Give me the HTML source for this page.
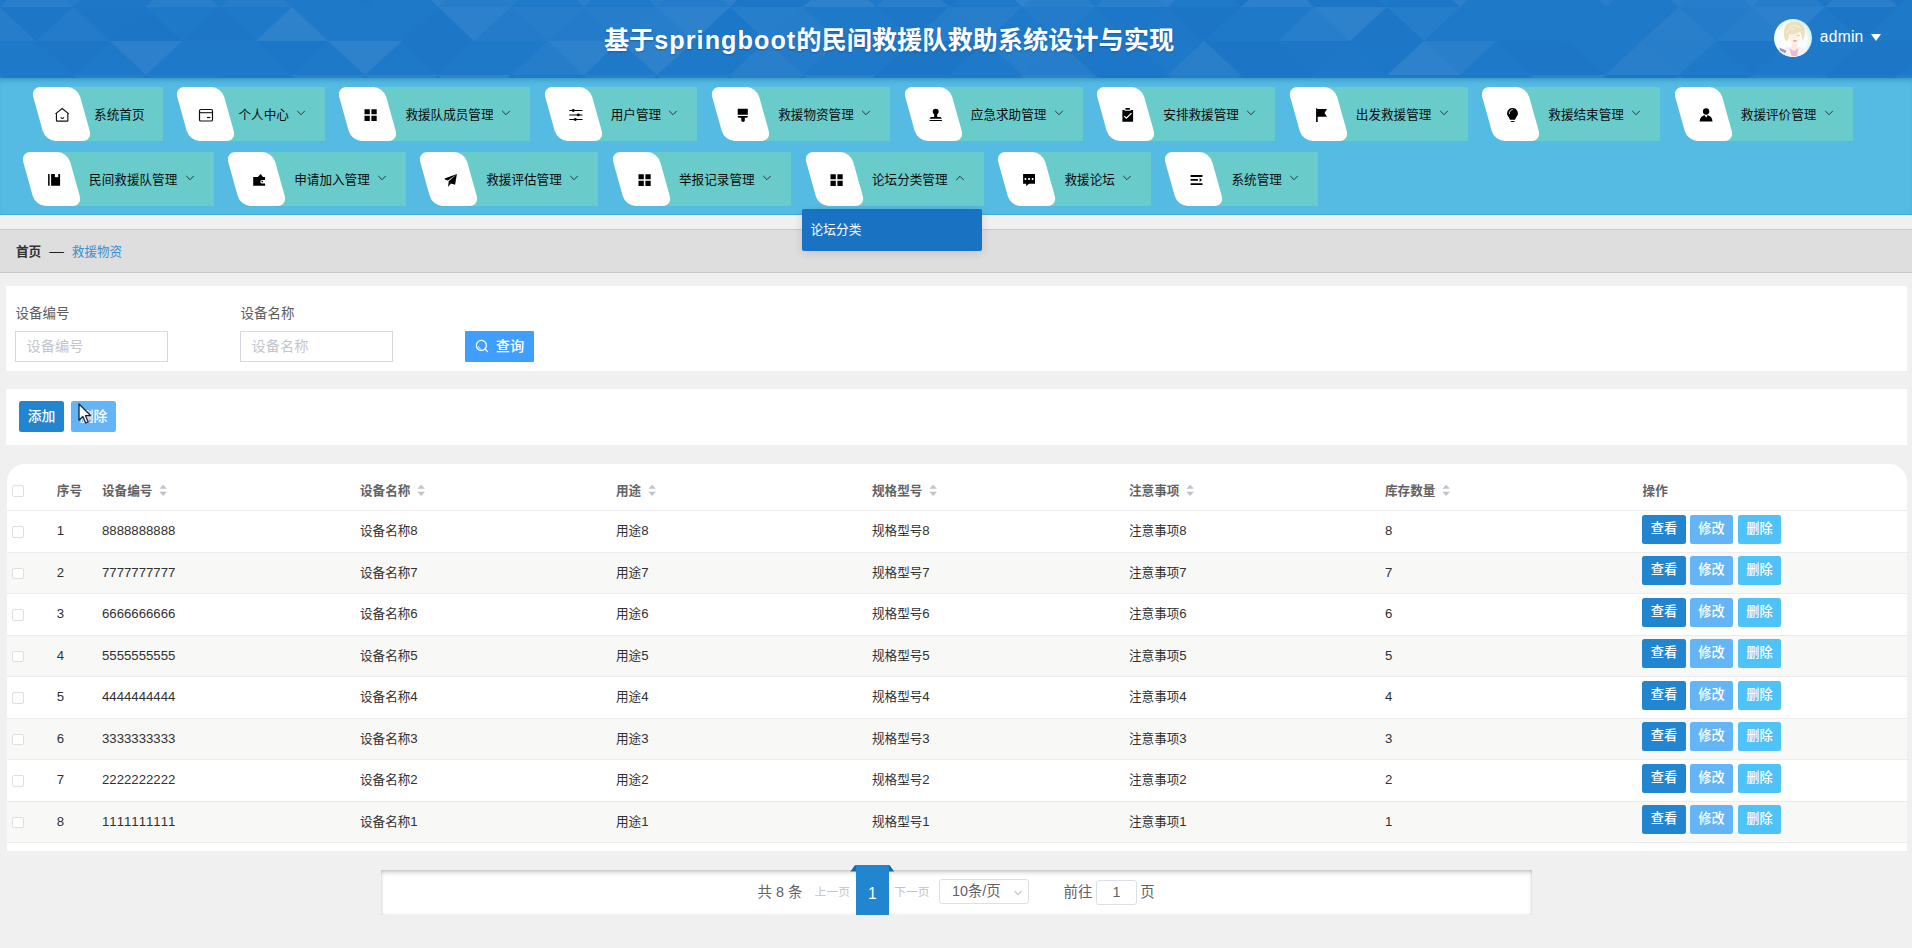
<!DOCTYPE html>
<html lang="zh-CN"><head><meta charset="utf-8"><title>基于springboot的民间救援队救助系统设计与实现</title>
<style>
*{margin:0;padding:0;box-sizing:border-box}
html,body{width:1912px;height:948px;overflow:hidden}
body{position:relative;background:#f0f0f0;font-family:"Liberation Sans","Noto Sans CJK SC",sans-serif;font-size:12.6px;color:#333}
i{font-style:normal;display:block}
#hdr{position:absolute;left:0;top:0;width:1912px;height:78px;background:#1f79c9;overflow:hidden}
#hdr svg.bg{position:absolute;left:0;top:0}
#title{position:absolute;left:0;top:21.4px;width:1778px;text-align:center;color:#fff;font-weight:bold;font-size:25.2px;line-height:38px;white-space:nowrap;text-shadow:0 1px 2px rgba(0,40,100,.35)}
#title span{letter-spacing:1.05px}
#ava{position:absolute;left:1774.1px;top:18.6px;width:38px;height:38px;border-radius:50%;overflow:hidden}
#uname{position:absolute;left:1819.8px;top:27.4px;color:#fff;font-size:15.6px;line-height:20px;letter-spacing:.25px}
#utri{position:absolute;left:1870.5px;top:34px}
#nav{position:absolute;left:0;top:78px;width:1912px;height:137px;background:#56bbe3;box-shadow:inset 0 5px 5px -3px rgba(20,110,150,.45),inset 0 -1px 0 rgba(0,60,90,.13)}
.mi{position:absolute;height:54px;background:linear-gradient(to right,transparent 22px,#6acbcb 22px);margin-top:-78px}
.mi .wb{position:absolute;left:-1.6px;top:0;width:46.9px;height:54px;background:#fff;border-radius:10px;transform:skewX(15.6deg)}
.mi .ic{position:absolute;top:18px;width:20px;height:20px}
.mi .ic svg{display:block}
.mi .mt{position:absolute;top:0;line-height:56px;font-size:12.6px;color:#0c0c0c;white-space:nowrap}
.mi .ar{position:absolute;top:22.9px}
#crumb{position:absolute;left:0;top:229px;width:1912px;height:44px;background:#dedede;border-top:1px solid #c9c9c9;border-bottom:1px solid #c9c9c9;line-height:42px;padding-left:16px;font-size:12.6px;white-space:nowrap}
#crumb b{color:#303133}
#crumb .sep{margin:0 8px 0 8px;color:#222;font-size:14.6px}
#crumb .cur{color:#3a8ed0}
#search{position:absolute;left:6px;top:286px;width:1901px;height:85px;background:#fff}
.lb{position:absolute;top:18.7px;font-size:13.5px;line-height:18px;color:#5e5e5e}
.inp{position:absolute;top:45.4px;width:153px;height:30.6px;border:1px solid #d6d7dc;background:#fff;line-height:28px;padding-left:10.6px;font-size:14.2px;color:#c3c6cd}
.qbtn{font-weight:500;position:absolute;left:458.8px;top:45px;width:69.4px;height:31px;background:#409eff;color:#fff;font-size:14.2px;line-height:30px;border-radius:1px;white-space:nowrap}
.qbtn svg{position:absolute;left:10.4px;top:8.4px}
.qbtn span{position:absolute;left:31px;top:0}
#ops{position:absolute;left:6px;top:389px;width:1901px;height:55.6px;background:#fff}
.b{position:absolute;display:block;font-weight:500;color:#fff;text-align:center;border-radius:2.5px;font-size:13.8px;white-space:nowrap}
.b1{background:#2185d0}.b2{background:#64b5f6}.b3{background:#4fc3f7}
#tbl{position:absolute;left:6.8px;top:463.7px;width:1900.2px;height:387px;background:#fff;border-radius:18px 18px 0 0;overflow:hidden}
.tr{position:absolute;left:0;width:1901px;border-bottom:1px solid #ececee}
.tr.odd{background:#f8f8f6}
.tr .c{position:absolute;top:0;line-height:40.7px;white-space:nowrap;color:#303133}
.th .c{line-height:54.6px;font-weight:bold;color:#626366}
.d{font-size:13.2px;font-kerning:none}
.cb{position:absolute;left:5.5px;width:11.8px;height:11.8px;border:1px solid #dddfe3;border-radius:2px;background:#fff}
.so{display:inline-block;vertical-align:-1.8px;margin-left:6.4px;width:8.4px;height:12.6px}
.tr .b{top:3.7px;height:29px;line-height:27.5px;width:44.2px;font-size:13.2px}
.tr .b2,.tr .b3{width:43px}
#pager{position:absolute;left:381px;top:870px;width:1151px;height:45px;background:#fff;box-shadow:inset 0 3px 5px -1px rgba(0,0,0,.22),inset 0 0 3px rgba(0,0,0,.12)}
#pager span.pt{position:absolute;top:0;line-height:45px;font-size:14.4px;color:#606266;white-space:nowrap}
#pager span.pn{position:absolute;top:0;line-height:45px;font-size:11.8px;color:#c0c4cc;white-space:nowrap}
.psel{position:absolute;left:558.3px;top:9.3px;width:90.2px;height:24.6px;border:1px solid #dcdfe6;border-radius:3px;font-size:14.4px;line-height:23px;color:#606266;padding-left:11.6px;white-space:nowrap}
.psel svg{position:absolute;left:73px;top:10px}
.pin{position:absolute;left:715.4px;top:10px;width:40.2px;height:24.8px;border:1px solid #dcdfe6;border-radius:3px;text-align:center;font-size:14.4px;line-height:22.5px;color:#606266}
#pact{position:absolute;left:855.8px;top:865.2px;width:33px;height:49.6px;background:#2185d0;border-radius:1px 1px 0 0}
#pact b{position:absolute;left:0;top:6.2px;width:33px;text-align:center;line-height:45px;color:#fff;font-size:15.6px;font-weight:normal}
#pact .f1{position:absolute;left:-5.4px;top:0;width:6.4px;height:6.4px;background:#1a69a4;clip-path:polygon(0 100%,70% 0,100% 0,100% 100%)}
#pact .f2{position:absolute;left:32px;top:0;width:6.4px;height:6.4px;background:#1a69a4;clip-path:polygon(0 0,30% 0,100% 100%,0 100%)}
#sub{position:absolute;left:802px;top:208.8px;width:180.2px;height:42.2px;background:#1a72c2;border-radius:2px;color:#fff;font-size:12.7px;line-height:42.5px;padding-left:8.6px;box-shadow:0 2px 10px rgba(0,0,0,.12)}
#cur{position:absolute;left:78px;top:402.5px}

#pact .bx{position:absolute;left:0;top:0;width:33px;height:49.6px;background:#2185d0;border-radius:1.5px 1.5px 0 0}

</style></head><body>
<div id="hdr">
<svg class="bg" width="1912" height="78" viewBox="0 0 1912 78"><path d="M-73 7L0 7L-36 -27Z" fill="#fff" fill-opacity="0.03"/><path d="M0 7L73 7L36 -27Z" fill="#fff" fill-opacity="0.05"/><path d="M36 -27L110 -27L73 7Z" fill="#fff" fill-opacity="0.02"/><path d="M73 7L146 7L110 -27Z" fill="#0a55a8" fill-opacity="0.03"/><path d="M110 -27L182 -27L146 7Z" fill="#0a55a8" fill-opacity="0.03"/><path d="M146 7L219 7L182 -27Z" fill="#fff" fill-opacity="0.05"/><path d="M219 7L292 7L256 -27Z" fill="#fff" fill-opacity="0.03"/><path d="M328 -27L402 -27L365 7Z" fill="#0a55a8" fill-opacity="0.06"/><path d="M402 -27L474 -27L438 7Z" fill="#fff" fill-opacity="0.07"/><path d="M438 7L511 7L474 -27Z" fill="#fff" fill-opacity="0.03"/><path d="M474 -27L548 -27L511 7Z" fill="#fff" fill-opacity="0.04"/><path d="M548 -27L620 -27L584 7Z" fill="#fff" fill-opacity="0.05"/><path d="M620 -27L694 -27L657 7Z" fill="#fff" fill-opacity="0.05"/><path d="M657 7L730 7L694 -27Z" fill="#fff" fill-opacity="0.02"/><path d="M694 -27L766 -27L730 7Z" fill="#fff" fill-opacity="0.06"/><path d="M730 7L803 7L766 -27Z" fill="#0a55a8" fill-opacity="0.05"/><path d="M766 -27L840 -27L803 7Z" fill="#0a55a8" fill-opacity="0.06"/><path d="M803 7L876 7L840 -27Z" fill="#fff" fill-opacity="0.07"/><path d="M876 7L949 7L912 -27Z" fill="#fff" fill-opacity="0.05"/><path d="M912 -27L986 -27L949 7Z" fill="#0a55a8" fill-opacity="0.09"/><path d="M986 -27L1058 -27L1022 7Z" fill="#fff" fill-opacity="0.08"/><path d="M1022 7L1095 7L1058 -27Z" fill="#fff" fill-opacity="0.05"/><path d="M1095 7L1168 7L1132 -27Z" fill="#fff" fill-opacity="0.05"/><path d="M1132 -27L1204 -27L1168 7Z" fill="#fff" fill-opacity="0.06"/><path d="M1204 -27L1278 -27L1241 7Z" fill="#0a55a8" fill-opacity="0.09"/><path d="M1241 7L1314 7L1278 -27Z" fill="#fff" fill-opacity="0.06"/><path d="M1278 -27L1350 -27L1314 7Z" fill="#0a55a8" fill-opacity="0.07"/><path d="M1314 7L1387 7L1350 -27Z" fill="#0a55a8" fill-opacity="0.09"/><path d="M1387 7L1460 7L1424 -27Z" fill="#0a55a8" fill-opacity="0.08"/><path d="M1424 -27L1496 -27L1460 7Z" fill="#fff" fill-opacity="0.06"/><path d="M1570 -27L1642 -27L1606 7Z" fill="#fff" fill-opacity="0.04"/><path d="M1642 -27L1716 -27L1679 7Z" fill="#fff" fill-opacity="0.05"/><path d="M1679 7L1752 7L1716 -27Z" fill="#fff" fill-opacity="0.03"/><path d="M1716 -27L1788 -27L1752 7Z" fill="#fff" fill-opacity="0.07"/><path d="M1752 7L1825 7L1788 -27Z" fill="#fff" fill-opacity="0.03"/><path d="M1788 -27L1862 -27L1825 7Z" fill="#0a55a8" fill-opacity="0.09"/><path d="M1825 7L1898 7L1862 -27Z" fill="#fff" fill-opacity="0.05"/><path d="M1862 -27L1934 -27L1898 7Z" fill="#0a55a8" fill-opacity="0.09"/><path d="M1971 7L2044 7L2008 -27Z" fill="#fff" fill-opacity="0.04"/><path d="M2008 -27L2080 -27L2044 7Z" fill="#fff" fill-opacity="0.07"/><path d="M-73 7L0 7L-36 41Z" fill="#fff" fill-opacity="0.03"/><path d="M-36 41L36 41L0 7Z" fill="#fff" fill-opacity="0.03"/><path d="M0 7L73 7L36 41Z" fill="#0a55a8" fill-opacity="0.07"/><path d="M36 41L110 41L73 7Z" fill="#fff" fill-opacity="0.02"/><path d="M73 7L146 7L110 41Z" fill="#0a55a8" fill-opacity="0.06"/><path d="M110 41L182 41L146 7Z" fill="#0a55a8" fill-opacity="0.10"/><path d="M182 41L256 41L219 7Z" fill="#0a55a8" fill-opacity="0.07"/><path d="M256 41L328 41L292 7Z" fill="#fff" fill-opacity="0.07"/><path d="M402 41L474 41L438 7Z" fill="#0a55a8" fill-opacity="0.06"/><path d="M438 7L511 7L474 41Z" fill="#fff" fill-opacity="0.06"/><path d="M474 41L548 41L511 7Z" fill="#fff" fill-opacity="0.02"/><path d="M511 7L584 7L548 41Z" fill="#fff" fill-opacity="0.03"/><path d="M548 41L620 41L584 7Z" fill="#fff" fill-opacity="0.02"/><path d="M584 7L657 7L620 41Z" fill="#fff" fill-opacity="0.03"/><path d="M620 41L694 41L657 7Z" fill="#fff" fill-opacity="0.04"/><path d="M657 7L730 7L694 41Z" fill="#fff" fill-opacity="0.07"/><path d="M694 41L766 41L730 7Z" fill="#0a55a8" fill-opacity="0.04"/><path d="M730 7L803 7L766 41Z" fill="#fff" fill-opacity="0.04"/><path d="M766 41L840 41L803 7Z" fill="#fff" fill-opacity="0.03"/><path d="M876 7L949 7L912 41Z" fill="#0a55a8" fill-opacity="0.06"/><path d="M912 41L986 41L949 7Z" fill="#fff" fill-opacity="0.03"/><path d="M949 7L1022 7L986 41Z" fill="#fff" fill-opacity="0.04"/><path d="M1022 7L1095 7L1058 41Z" fill="#fff" fill-opacity="0.02"/><path d="M1095 7L1168 7L1132 41Z" fill="#0a55a8" fill-opacity="0.04"/><path d="M1132 41L1204 41L1168 7Z" fill="#0a55a8" fill-opacity="0.03"/><path d="M1168 7L1241 7L1204 41Z" fill="#0a55a8" fill-opacity="0.10"/><path d="M1278 41L1350 41L1314 7Z" fill="#fff" fill-opacity="0.04"/><path d="M1314 7L1387 7L1350 41Z" fill="#fff" fill-opacity="0.07"/><path d="M1350 41L1424 41L1387 7Z" fill="#0a55a8" fill-opacity="0.08"/><path d="M1387 7L1460 7L1424 41Z" fill="#fff" fill-opacity="0.03"/><path d="M1642 41L1716 41L1679 7Z" fill="#fff" fill-opacity="0.05"/><path d="M1679 7L1752 7L1716 41Z" fill="#fff" fill-opacity="0.02"/><path d="M1716 41L1788 41L1752 7Z" fill="#fff" fill-opacity="0.04"/><path d="M1752 7L1825 7L1788 41Z" fill="#fff" fill-opacity="0.06"/><path d="M1825 7L1898 7L1862 41Z" fill="#0a55a8" fill-opacity="0.10"/><path d="M1934 41L2008 41L1971 7Z" fill="#fff" fill-opacity="0.03"/><path d="M1971 7L2044 7L2008 41Z" fill="#fff" fill-opacity="0.03"/><path d="M-73 75L0 75L-36 41Z" fill="#fff" fill-opacity="0.06"/><path d="M36 41L110 41L73 75Z" fill="#0a55a8" fill-opacity="0.08"/><path d="M110 41L182 41L146 75Z" fill="#fff" fill-opacity="0.06"/><path d="M256 41L328 41L292 75Z" fill="#0a55a8" fill-opacity="0.04"/><path d="M328 41L402 41L365 75Z" fill="#fff" fill-opacity="0.07"/><path d="M402 41L474 41L438 75Z" fill="#0a55a8" fill-opacity="0.06"/><path d="M511 75L584 75L548 41Z" fill="#fff" fill-opacity="0.03"/><path d="M548 41L620 41L584 75Z" fill="#fff" fill-opacity="0.07"/><path d="M620 41L694 41L657 75Z" fill="#fff" fill-opacity="0.07"/><path d="M730 75L803 75L766 41Z" fill="#fff" fill-opacity="0.05"/><path d="M766 41L840 41L803 75Z" fill="#fff" fill-opacity="0.02"/><path d="M876 75L949 75L912 41Z" fill="#0a55a8" fill-opacity="0.10"/><path d="M912 41L986 41L949 75Z" fill="#0a55a8" fill-opacity="0.09"/><path d="M986 41L1058 41L1022 75Z" fill="#fff" fill-opacity="0.04"/><path d="M1022 75L1095 75L1058 41Z" fill="#fff" fill-opacity="0.03"/><path d="M1058 41L1132 41L1095 75Z" fill="#0a55a8" fill-opacity="0.05"/><path d="M1095 75L1168 75L1132 41Z" fill="#0a55a8" fill-opacity="0.04"/><path d="M1168 75L1241 75L1204 41Z" fill="#fff" fill-opacity="0.05"/><path d="M1204 41L1278 41L1241 75Z" fill="#0a55a8" fill-opacity="0.09"/><path d="M1241 75L1314 75L1278 41Z" fill="#0a55a8" fill-opacity="0.09"/><path d="M1278 41L1350 41L1314 75Z" fill="#0a55a8" fill-opacity="0.07"/><path d="M1314 75L1387 75L1350 41Z" fill="#0a55a8" fill-opacity="0.03"/><path d="M1350 41L1424 41L1387 75Z" fill="#0a55a8" fill-opacity="0.04"/><path d="M1387 75L1460 75L1424 41Z" fill="#fff" fill-opacity="0.07"/><path d="M1424 41L1496 41L1460 75Z" fill="#fff" fill-opacity="0.05"/><path d="M1496 41L1570 41L1533 75Z" fill="#0a55a8" fill-opacity="0.05"/><path d="M1533 75L1606 75L1570 41Z" fill="#0a55a8" fill-opacity="0.07"/><path d="M1606 75L1679 75L1642 41Z" fill="#fff" fill-opacity="0.05"/><path d="M1642 41L1716 41L1679 75Z" fill="#fff" fill-opacity="0.04"/><path d="M1716 41L1788 41L1752 75Z" fill="#0a55a8" fill-opacity="0.07"/><path d="M1825 75L1898 75L1862 41Z" fill="#0a55a8" fill-opacity="0.07"/><path d="M1862 41L1934 41L1898 75Z" fill="#0a55a8" fill-opacity="0.07"/><path d="M1934 41L2008 41L1971 75Z" fill="#0a55a8" fill-opacity="0.07"/><path d="M1971 75L2044 75L2008 41Z" fill="#0a55a8" fill-opacity="0.10"/><path d="M-36 109L36 109L0 75Z" fill="#fff" fill-opacity="0.05"/><path d="M73 75L146 75L110 109Z" fill="#fff" fill-opacity="0.03"/><path d="M110 109L182 109L146 75Z" fill="#0a55a8" fill-opacity="0.04"/><path d="M146 75L219 75L182 109Z" fill="#fff" fill-opacity="0.02"/><path d="M292 75L365 75L328 109Z" fill="#fff" fill-opacity="0.06"/><path d="M365 75L438 75L402 109Z" fill="#fff" fill-opacity="0.07"/><path d="M438 75L511 75L474 109Z" fill="#fff" fill-opacity="0.08"/><path d="M474 109L548 109L511 75Z" fill="#0a55a8" fill-opacity="0.06"/><path d="M584 75L657 75L620 109Z" fill="#fff" fill-opacity="0.05"/><path d="M620 109L694 109L657 75Z" fill="#0a55a8" fill-opacity="0.05"/><path d="M657 75L730 75L694 109Z" fill="#fff" fill-opacity="0.04"/><path d="M730 75L803 75L766 109Z" fill="#fff" fill-opacity="0.05"/><path d="M766 109L840 109L803 75Z" fill="#0a55a8" fill-opacity="0.03"/><path d="M803 75L876 75L840 109Z" fill="#fff" fill-opacity="0.06"/><path d="M840 109L912 109L876 75Z" fill="#0a55a8" fill-opacity="0.03"/><path d="M986 109L1058 109L1022 75Z" fill="#fff" fill-opacity="0.04"/><path d="M1022 75L1095 75L1058 109Z" fill="#fff" fill-opacity="0.07"/><path d="M1058 109L1132 109L1095 75Z" fill="#fff" fill-opacity="0.03"/><path d="M1095 75L1168 75L1132 109Z" fill="#0a55a8" fill-opacity="0.09"/><path d="M1168 75L1241 75L1204 109Z" fill="#fff" fill-opacity="0.03"/><path d="M1241 75L1314 75L1278 109Z" fill="#0a55a8" fill-opacity="0.08"/><path d="M1278 109L1350 109L1314 75Z" fill="#fff" fill-opacity="0.02"/><path d="M1350 109L1424 109L1387 75Z" fill="#0a55a8" fill-opacity="0.04"/><path d="M1496 109L1570 109L1533 75Z" fill="#fff" fill-opacity="0.07"/><path d="M1533 75L1606 75L1570 109Z" fill="#fff" fill-opacity="0.07"/><path d="M1570 109L1642 109L1606 75Z" fill="#0a55a8" fill-opacity="0.05"/><path d="M1606 75L1679 75L1642 109Z" fill="#0a55a8" fill-opacity="0.09"/><path d="M1642 109L1716 109L1679 75Z" fill="#fff" fill-opacity="0.03"/><path d="M1679 75L1752 75L1716 109Z" fill="#0a55a8" fill-opacity="0.05"/><path d="M1716 109L1788 109L1752 75Z" fill="#fff" fill-opacity="0.03"/><path d="M1752 75L1825 75L1788 109Z" fill="#fff" fill-opacity="0.03"/><path d="M1788 109L1862 109L1825 75Z" fill="#fff" fill-opacity="0.04"/><path d="M1862 109L1934 109L1898 75Z" fill="#fff" fill-opacity="0.05"/><path d="M1898 75L1971 75L1934 109Z" fill="#fff" fill-opacity="0.04"/><path d="M1934 109L2008 109L1971 75Z" fill="#fff" fill-opacity="0.04"/><path d="M1971 75L2044 75L2008 109Z" fill="#fff" fill-opacity="0.06"/></svg>
<div id="title">基于<span>springboot</span>的民间救援队救助系统设计与实现</div>
<div id="ava"><svg width="38" height="38" viewBox="0 0 38 38"><defs><radialGradient id="ag" cx="42%" cy="55%" r="62%"><stop offset="0" stop-color="#ffffff"/><stop offset=".72" stop-color="#f6fdfc"/><stop offset="1" stop-color="#bdeef2"/></radialGradient><filter id="af" x="-10%" y="-10%" width="120%" height="120%"><feGaussianBlur stdDeviation=".55"/></filter></defs><rect width="38" height="38" fill="url(#ag)"/><g filter="url(#af)"><path d="M3 38 L6 31 L15 27.5 L20 31 L25 27.5 L33 31 L36 38 Z" fill="#f6f1f6"/><path d="M5.5 28.5 L12.5 31.8 L11 34.2 L6 31.5 Z" fill="#6a5a86" fill-opacity=".6"/><path d="M15.5 29 L17.5 37 L23 37 L24.5 29 L20 32 Z" fill="#e3b3c9" fill-opacity=".85"/><path d="M18 24 H23 L23.5 29 L20.3 31.5 L17 29 Z" fill="#fbe9df"/><ellipse cx="20.8" cy="18.6" rx="5.6" ry="6.4" fill="#fdf1e8"/><path d="M10.5 19.5 C8 9 13 2.5 20 2.6 C27.5 2.2 32.5 8 30.5 17 C30 19.5 29 21 28.2 21.8 C28.6 17.5 27.4 14.5 25.4 12.8 C22.5 15.5 18 16 15.5 15 C15 18 14.2 20.6 13.4 22.4 C12 22 11 21 10.5 19.5 Z" fill="#ece1bd"/><path d="M14 9 C17 5.5 23 5.5 26.5 9 M12.5 14 C14 10.5 17 9.5 20 10" fill="none" stroke="#f6efd6" stroke-width="1.3"/><path d="M22.5 16.8 L25.6 16.3" stroke="#c9b98c" stroke-width=".7"/><ellipse cx="20.9" cy="21.8" rx="1.9" ry=".85" fill="#e79c92"/></g></svg></div>
<div id="uname">admin</div>
<svg id="utri" width="10" height="7" viewBox="0 0 10 7"><path d="M0 0 H10 L5 7 Z" fill="#fff"/></svg>
</div>

<div id="nav">
<div class="mi" style="left:39.3px;top:87px;width:124.2px"><i class="wb"></i><span class="ic" style="left:12.3px"><svg width="20" height="20" viewBox="0 0 20 20"><path d="M3.5 8.9 L10.15 3.5 L16.8 8.9" fill="none" stroke="#111" stroke-width="1.15" stroke-linejoin="miter"/><path d="M4.45 8.3 V15.5 Q4.45 16.15 5.1 16.15 H15.2 Q15.85 16.15 15.85 15.5 V8.3" fill="none" stroke="#111" stroke-width="1.15"/><path d="M8.6 12.3 Q10.2 14.5 11.9 12.3" fill="none" stroke="#111" stroke-width="1.1"/></svg></span><span class="mt" style="left:54.8px">系统首页</span></div>
<div class="mi" style="left:183.7px;top:87px;width:141.6px"><i class="wb"></i><span class="ic" style="left:12.3px"><svg width="20" height="20" viewBox="0 0 20 20"><rect x="3.5" y="4.5" width="13" height="11.5" rx="1.3" fill="none" stroke="#111" stroke-width="1.2"/><path d="M3.5 7.7 H16.5" stroke="#111" stroke-width="1.1"/><path d="M11 12.5 H14.4" stroke="#111" stroke-width="1.2"/></svg></span><span class="mt" style="left:54.8px">个人中心</span><svg class="ar" style="left:112.6px" width="10" height="6" viewBox="0 0 10 6"><path d="M1.2 0.9 L5 4.7 L8.8 0.9" fill="none" stroke="#2a2a2a" stroke-width="0.95"/></svg></div>
<div class="mi" style="left:345.3px;top:87px;width:184.7px"><i class="wb"></i><span class="ic" style="left:14.3px"><svg width="20" height="20" viewBox="0 0 20 20"><path d="M4.5 4.15 h5.3 v5.1 h-5.3 Z M11.4 4.15 h5.3 v5.1 h-5.3 Z M4.5 10.85 h5.3 v5.1 h-5.3 Z M11.4 10.85 h5.3 v5.1 h-5.3 Z" fill="#000"/></svg></span><span class="mt" style="left:60.1px">救援队成员管理</span><svg class="ar" style="left:155.7px" width="10" height="6" viewBox="0 0 10 6"><path d="M1.2 0.9 L5 4.7 L8.8 0.9" fill="none" stroke="#2a2a2a" stroke-width="0.95"/></svg></div>
<div class="mi" style="left:551.4px;top:87px;width:146.1px"><i class="wb"></i><span class="ic" style="left:14.3px"><svg width="20" height="20" viewBox="0 0 20 20"><path d="M3.7 5.5 H16.1 M3.7 9.9 H16.1 M3.7 14.5 H16.1" stroke="#000" stroke-width="1.05" stroke-linecap="round"/><circle cx="7.3" cy="5.5" r="1.45" fill="#000"/><circle cx="12.3" cy="9.9" r="1.45" fill="#000"/><circle cx="9.3" cy="14.5" r="1.45" fill="#000"/></svg></span><span class="mt" style="left:59.3px">用户管理</span><svg class="ar" style="left:117.1px" width="10" height="6" viewBox="0 0 10 6"><path d="M1.2 0.9 L5 4.7 L8.8 0.9" fill="none" stroke="#2a2a2a" stroke-width="0.95"/></svg></div>
<div class="mi" style="left:718.9px;top:87px;width:171.3px"><i class="wb"></i><span class="ic" style="left:14.3px"><svg width="20" height="20" viewBox="0 0 20 20"><path d="M4.7 3.8 H14.8 V9.8 H4.7 Z M4.7 10.9 H14.8 V11.5 Q14.8 12.7 13.4 12.7 H11.8 V15.6 Q11.8 17 10.05 17 Q8.3 17 8.3 15.6 V12.7 H6.1 Q4.7 12.7 4.7 11.5 Z" fill="#000"/></svg></span><span class="mt" style="left:59.3px">救援物资管理</span><svg class="ar" style="left:142.3px" width="10" height="6" viewBox="0 0 10 6"><path d="M1.2 0.9 L5 4.7 L8.8 0.9" fill="none" stroke="#2a2a2a" stroke-width="0.95"/></svg></div>
<div class="mi" style="left:911.5px;top:87px;width:171.3px"><i class="wb"></i><span class="ic" style="left:14.3px"><svg width="20" height="20" viewBox="0 0 20 20"><circle cx="9.7" cy="6.6" r="2.95" fill="#000"/><path d="M8.2 8 H11.2 V11.9 H14.4 L15.5 13 V13.8 H3.9 V13 L5 11.9 H8.2 Z M3.5 15.1 H15.9 V16 H3.5 Z" fill="#000"/></svg></span><span class="mt" style="left:59.3px">应急求助管理</span><svg class="ar" style="left:142.3px" width="10" height="6" viewBox="0 0 10 6"><path d="M1.2 0.9 L5 4.7 L8.8 0.9" fill="none" stroke="#2a2a2a" stroke-width="0.95"/></svg></div>
<div class="mi" style="left:1104.0px;top:87px;width:171.3px"><i class="wb"></i><span class="ic" style="left:14.3px"><svg width="20" height="20" viewBox="0 0 20 20"><path d="M4.4 5 H6.7 V5.8 H12.7 V5 H15.1 V16.7 H4.4 Z M7.5 3.1 H11.9 V4.7 H7.5 Z" fill="#000"/><path d="M6.2 11.1 L8.4 13.2 L13.5 8.1" fill="none" stroke="#fff" stroke-width="1.3"/></svg></span><span class="mt" style="left:59.3px">安排救援管理</span><svg class="ar" style="left:142.3px" width="10" height="6" viewBox="0 0 10 6"><path d="M1.2 0.9 L5 4.7 L8.8 0.9" fill="none" stroke="#2a2a2a" stroke-width="0.95"/></svg></div>
<div class="mi" style="left:1296.5px;top:87px;width:171.3px"><i class="wb"></i><span class="ic" style="left:14.3px"><svg width="20" height="20" viewBox="0 0 20 20"><path d="M5.1 2.9 L6.7 4.1 H16 L13.5 7.9 L16 11.7 H6.7 V16.9 H5.1 Z" fill="#000"/></svg></span><span class="mt" style="left:59.3px">出发救援管理</span><svg class="ar" style="left:142.3px" width="10" height="6" viewBox="0 0 10 6"><path d="M1.2 0.9 L5 4.7 L8.8 0.9" fill="none" stroke="#2a2a2a" stroke-width="0.95"/></svg></div>
<div class="mi" style="left:1489.0px;top:87px;width:171.3px"><i class="wb"></i><span class="ic" style="left:14.3px"><svg width="20" height="20" viewBox="0 0 20 20"><path d="M9.5 2.9 A5.4 5.4 0 0 1 13.2 12.2 L12 14.7 H7 L5.8 12.2 A5.4 5.4 0 0 1 9.5 2.9 Z" fill="#000"/><path d="M7.7 16.1 H11.5 V17 H7.7 Z" fill="#000"/><path d="M6.3 8.6 A3.4 3.4 0 0 1 9.3 4.7" fill="none" stroke="#fff" stroke-width=".9" stroke-linecap="round"/></svg></span><span class="mt" style="left:59.3px">救援结束管理</span><svg class="ar" style="left:142.3px" width="10" height="6" viewBox="0 0 10 6"><path d="M1.2 0.9 L5 4.7 L8.8 0.9" fill="none" stroke="#2a2a2a" stroke-width="0.95"/></svg></div>
<div class="mi" style="left:1681.5px;top:87px;width:171.3px"><i class="wb"></i><span class="ic" style="left:14.3px"><svg width="20" height="20" viewBox="0 0 20 20"><circle cx="10.1" cy="6.5" r="3.15" fill="#000"/><path d="M3.6 16.6 Q3.9 11.2 8.7 10.2 L10.1 12.7 L11.5 10.2 Q16.3 11.2 16.5 16.6 Z" fill="#000"/></svg></span><span class="mt" style="left:59.3px">救援评价管理</span><svg class="ar" style="left:142.3px" width="10" height="6" viewBox="0 0 10 6"><path d="M1.2 0.9 L5 4.7 L8.8 0.9" fill="none" stroke="#2a2a2a" stroke-width="0.95"/></svg></div>
<div class="mi" style="left:29.3px;top:152px;width:184.4px"><i class="wb"></i><span class="ic" style="left:14.3px"><svg width="20" height="20" viewBox="0 0 20 20"><path d="M4.1 4.1 H5.6 V15.7 H4.1 Z M7.1 4.1 H10.9 V7 L12.6 7.3 L14.3 7 V4.1 H16.1 V15.7 H7.1 Z" fill="#000"/></svg></span><span class="mt" style="left:59.8px">民间救援队管理</span><svg class="ar" style="left:155.4px" width="10" height="6" viewBox="0 0 10 6"><path d="M1.2 0.9 L5 4.7 L8.8 0.9" fill="none" stroke="#2a2a2a" stroke-width="0.95"/></svg></div>
<div class="mi" style="left:234.4px;top:152px;width:171.8px"><i class="wb"></i><span class="ic" style="left:14.3px"><svg width="20" height="20" viewBox="0 0 20 20"><path d="M8.5 7.2 L11.7 4.1 L14.2 7.2 Z" fill="#000"/><path d="M4.2 7 H16.1 V9.9 H13 Q11.3 9.9 11.3 11.65 Q11.3 13.4 13 13.4 H16.1 V15.8 H4.2 Z" fill="#000"/><circle cx="13.2" cy="11.6" r=".8" fill="#000"/></svg></span><span class="mt" style="left:59.8px">申请加入管理</span><svg class="ar" style="left:142.8px" width="10" height="6" viewBox="0 0 10 6"><path d="M1.2 0.9 L5 4.7 L8.8 0.9" fill="none" stroke="#2a2a2a" stroke-width="0.95"/></svg></div>
<div class="mi" style="left:426.9px;top:152px;width:171.3px"><i class="wb"></i><span class="ic" style="left:14.3px"><svg width="20" height="20" viewBox="0 0 20 20"><path d="M15.9 3.9 L3.6 8.5 L3.9 9.5 L7.0 10.4 Z M15.9 3.9 L7.7 11.2 L7.1 16.9 L9.9 13.5 L14.1 14.8 Z" fill="#000"/></svg></span><span class="mt" style="left:59.3px">救援评估管理</span><svg class="ar" style="left:142.3px" width="10" height="6" viewBox="0 0 10 6"><path d="M1.2 0.9 L5 4.7 L8.8 0.9" fill="none" stroke="#2a2a2a" stroke-width="0.95"/></svg></div>
<div class="mi" style="left:619.5px;top:152px;width:171.5px"><i class="wb"></i><span class="ic" style="left:14.3px"><svg width="20" height="20" viewBox="0 0 20 20"><path d="M4.5 4.15 h5.3 v5.1 h-5.3 Z M11.4 4.15 h5.3 v5.1 h-5.3 Z M4.5 10.85 h5.3 v5.1 h-5.3 Z M11.4 10.85 h5.3 v5.1 h-5.3 Z" fill="#000"/></svg></span><span class="mt" style="left:59.5px">举报记录管理</span><svg class="ar" style="left:142.5px" width="10" height="6" viewBox="0 0 10 6"><path d="M1.2 0.9 L5 4.7 L8.8 0.9" fill="none" stroke="#2a2a2a" stroke-width="0.95"/></svg></div>
<div class="mi" style="left:812.2px;top:152px;width:171.8px"><i class="wb"></i><span class="ic" style="left:14.3px"><svg width="20" height="20" viewBox="0 0 20 20"><path d="M4.5 4.15 h5.3 v5.1 h-5.3 Z M11.4 4.15 h5.3 v5.1 h-5.3 Z M4.5 10.85 h5.3 v5.1 h-5.3 Z M11.4 10.85 h5.3 v5.1 h-5.3 Z" fill="#000"/></svg></span><span class="mt" style="left:59.8px">论坛分类管理</span><svg class="ar" style="left:142.8px" width="10" height="6" viewBox="0 0 10 6"><path d="M1.2 5.1 L5 1.3 L8.8 5.1" fill="none" stroke="#2a2a2a" stroke-width="0.95"/></svg></div>
<div class="mi" style="left:1004.7px;top:152px;width:146.6px"><i class="wb"></i><span class="ic" style="left:14.3px"><svg width="20" height="20" viewBox="0 0 20 20"><path d="M4.1 4.1 H16 V13.8 H10.1 L7.2 16 L7.1 13.8 H4.1 Z" fill="#000"/><path d="M5.7 8 h1.5 v1.9 h-1.5 Z M9.2 8 h1.7 v1.9 h-1.7 Z M12.8 8 h1.6 v1.9 h-1.6 Z" fill="#fff"/></svg></span><span class="mt" style="left:59.8px">救援论坛</span><svg class="ar" style="left:117.6px" width="10" height="6" viewBox="0 0 10 6"><path d="M1.2 0.9 L5 4.7 L8.8 0.9" fill="none" stroke="#2a2a2a" stroke-width="0.95"/></svg></div>
<div class="mi" style="left:1171.7px;top:152px;width:146.6px"><i class="wb"></i><span class="ic" style="left:14.3px"><svg width="20" height="20" viewBox="0 0 20 20"><path d="M5.3 6 H15.8 M5.3 9.9 H11.2 M5.3 14.1 H15.8" stroke="#000" stroke-width="1.8" stroke-linecap="round"/><path d="M13.6 8.1 L16.1 9.9 L13.6 11.7 Z" fill="#000"/></svg></span><span class="mt" style="left:59.8px">系统管理</span><svg class="ar" style="left:117.6px" width="10" height="6" viewBox="0 0 10 6"><path d="M1.2 0.9 L5 4.7 L8.8 0.9" fill="none" stroke="#2a2a2a" stroke-width="0.95"/></svg></div>
</div>
<div id="crumb"><b>首页</b><span class="sep">—</span><span class="cur">救援物资</span></div>
<div id="search">
<label class="lb" style="left:9.6px">设备编号</label>
<div class="inp" style="left:9px"><span>设备编号</span></div>
<label class="lb" style="left:234.4px">设备名称</label>
<div class="inp" style="left:234px"><span>设备名称</span></div>
<div class="qbtn"><svg width="14" height="14" viewBox="0 0 14 14"><circle cx="6.4" cy="6.4" r="5" fill="none" stroke="#fff" stroke-width="1.25"/><path d="M10 10 L12.6 12.6" stroke="#fff" stroke-width="1.3" stroke-linecap="round"/><path d="M3.2 7.2 A3.4 3.4 0 0 0 5.6 9.6" fill="none" stroke="#fff" stroke-width="0.9"/></svg><span>查询</span></div>
</div>
<div id="ops"><span class="b b1" style="left:13px;top:12px;width:45px;height:31px;line-height:31.4px">添加</span><span class="b b2" style="left:65.2px;top:12px;width:44.8px;height:31px;line-height:31.4px">删除</span></div>
<div id="tbl">
<div class="tr th" style="top:0;height:47.4px"><i class="cb" style="top:21.7px"></i><span class="c" style="left:50.0px">序号</span><span class="c" style="left:95.2px">设备编号<svg class="so" width="8" height="12" viewBox="0 0 8 12"><path d="M0.3 4.6 L4 0.6 L7.7 4.6 Z M0.3 7.4 L4 11.4 L7.7 7.4 Z" fill="#c0c4cc"/></svg></span><span class="c" style="left:353.2px">设备名称<svg class="so" width="8" height="12" viewBox="0 0 8 12"><path d="M0.3 4.6 L4 0.6 L7.7 4.6 Z M0.3 7.4 L4 11.4 L7.7 7.4 Z" fill="#c0c4cc"/></svg></span><span class="c" style="left:609.2px">用途<svg class="so" width="8" height="12" viewBox="0 0 8 12"><path d="M0.3 4.6 L4 0.6 L7.7 4.6 Z M0.3 7.4 L4 11.4 L7.7 7.4 Z" fill="#c0c4cc"/></svg></span><span class="c" style="left:865.2px">规格型号<svg class="so" width="8" height="12" viewBox="0 0 8 12"><path d="M0.3 4.6 L4 0.6 L7.7 4.6 Z M0.3 7.4 L4 11.4 L7.7 7.4 Z" fill="#c0c4cc"/></svg></span><span class="c" style="left:1122.2px">注意事项<svg class="so" width="8" height="12" viewBox="0 0 8 12"><path d="M0.3 4.6 L4 0.6 L7.7 4.6 Z M0.3 7.4 L4 11.4 L7.7 7.4 Z" fill="#c0c4cc"/></svg></span><span class="c" style="left:1378.2px">库存数量<svg class="so" width="8" height="12" viewBox="0 0 8 12"><path d="M0.3 4.6 L4 0.6 L7.7 4.6 Z M0.3 7.4 L4 11.4 L7.7 7.4 Z" fill="#c0c4cc"/></svg></span><span class="c" style="left:1635.8px">操作</span></div>
<div class="tr" style="top:47.40px;height:41.50px"><i class="cb" style="top:15px"></i><span class="c" style="left:50.0px"><span class="d">1</span></span><span class="c" style="left:95.2px"><span class="d">8888888888</span></span><span class="c" style="left:353.2px">设备名称<span class="d">8</span></span><span class="c" style="left:609.2px">用途<span class="d">8</span></span><span class="c" style="left:865.2px">规格型号<span class="d">8</span></span><span class="c" style="left:1122.2px">注意事项<span class="d">8</span></span><span class="c" style="left:1378.2px"><span class="d">8</span></span><span class="b b1" style="left:1635px">查看</span><span class="b b2" style="left:1683.2px">修改</span><span class="b b3" style="left:1731.1px">删除</span></div>
<div class="tr odd" style="top:88.90px;height:41.50px"><i class="cb" style="top:15px"></i><span class="c" style="left:50.0px"><span class="d">2</span></span><span class="c" style="left:95.2px"><span class="d">7777777777</span></span><span class="c" style="left:353.2px">设备名称<span class="d">7</span></span><span class="c" style="left:609.2px">用途<span class="d">7</span></span><span class="c" style="left:865.2px">规格型号<span class="d">7</span></span><span class="c" style="left:1122.2px">注意事项<span class="d">7</span></span><span class="c" style="left:1378.2px"><span class="d">7</span></span><span class="b b1" style="left:1635px">查看</span><span class="b b2" style="left:1683.2px">修改</span><span class="b b3" style="left:1731.1px">删除</span></div>
<div class="tr" style="top:130.40px;height:41.50px"><i class="cb" style="top:15px"></i><span class="c" style="left:50.0px"><span class="d">3</span></span><span class="c" style="left:95.2px"><span class="d">6666666666</span></span><span class="c" style="left:353.2px">设备名称<span class="d">6</span></span><span class="c" style="left:609.2px">用途<span class="d">6</span></span><span class="c" style="left:865.2px">规格型号<span class="d">6</span></span><span class="c" style="left:1122.2px">注意事项<span class="d">6</span></span><span class="c" style="left:1378.2px"><span class="d">6</span></span><span class="b b1" style="left:1635px">查看</span><span class="b b2" style="left:1683.2px">修改</span><span class="b b3" style="left:1731.1px">删除</span></div>
<div class="tr odd" style="top:171.90px;height:41.50px"><i class="cb" style="top:15px"></i><span class="c" style="left:50.0px"><span class="d">4</span></span><span class="c" style="left:95.2px"><span class="d">5555555555</span></span><span class="c" style="left:353.2px">设备名称<span class="d">5</span></span><span class="c" style="left:609.2px">用途<span class="d">5</span></span><span class="c" style="left:865.2px">规格型号<span class="d">5</span></span><span class="c" style="left:1122.2px">注意事项<span class="d">5</span></span><span class="c" style="left:1378.2px"><span class="d">5</span></span><span class="b b1" style="left:1635px">查看</span><span class="b b2" style="left:1683.2px">修改</span><span class="b b3" style="left:1731.1px">删除</span></div>
<div class="tr" style="top:213.40px;height:41.50px"><i class="cb" style="top:15px"></i><span class="c" style="left:50.0px"><span class="d">5</span></span><span class="c" style="left:95.2px"><span class="d">4444444444</span></span><span class="c" style="left:353.2px">设备名称<span class="d">4</span></span><span class="c" style="left:609.2px">用途<span class="d">4</span></span><span class="c" style="left:865.2px">规格型号<span class="d">4</span></span><span class="c" style="left:1122.2px">注意事项<span class="d">4</span></span><span class="c" style="left:1378.2px"><span class="d">4</span></span><span class="b b1" style="left:1635px">查看</span><span class="b b2" style="left:1683.2px">修改</span><span class="b b3" style="left:1731.1px">删除</span></div>
<div class="tr odd" style="top:254.90px;height:41.50px"><i class="cb" style="top:15px"></i><span class="c" style="left:50.0px"><span class="d">6</span></span><span class="c" style="left:95.2px"><span class="d">3333333333</span></span><span class="c" style="left:353.2px">设备名称<span class="d">3</span></span><span class="c" style="left:609.2px">用途<span class="d">3</span></span><span class="c" style="left:865.2px">规格型号<span class="d">3</span></span><span class="c" style="left:1122.2px">注意事项<span class="d">3</span></span><span class="c" style="left:1378.2px"><span class="d">3</span></span><span class="b b1" style="left:1635px">查看</span><span class="b b2" style="left:1683.2px">修改</span><span class="b b3" style="left:1731.1px">删除</span></div>
<div class="tr" style="top:296.40px;height:41.50px"><i class="cb" style="top:15px"></i><span class="c" style="left:50.0px"><span class="d">7</span></span><span class="c" style="left:95.2px"><span class="d">2222222222</span></span><span class="c" style="left:353.2px">设备名称<span class="d">2</span></span><span class="c" style="left:609.2px">用途<span class="d">2</span></span><span class="c" style="left:865.2px">规格型号<span class="d">2</span></span><span class="c" style="left:1122.2px">注意事项<span class="d">2</span></span><span class="c" style="left:1378.2px"><span class="d">2</span></span><span class="b b1" style="left:1635px">查看</span><span class="b b2" style="left:1683.2px">修改</span><span class="b b3" style="left:1731.1px">删除</span></div>
<div class="tr odd" style="top:337.90px;height:41.50px"><i class="cb" style="top:15px"></i><span class="c" style="left:50.0px"><span class="d">8</span></span><span class="c" style="left:95.2px"><span class="d">1111111111</span></span><span class="c" style="left:353.2px">设备名称<span class="d">1</span></span><span class="c" style="left:609.2px">用途<span class="d">1</span></span><span class="c" style="left:865.2px">规格型号<span class="d">1</span></span><span class="c" style="left:1122.2px">注意事项<span class="d">1</span></span><span class="c" style="left:1378.2px"><span class="d">1</span></span><span class="b b1" style="left:1635px">查看</span><span class="b b2" style="left:1683.2px">修改</span><span class="b b3" style="left:1731.1px">删除</span></div>
</div>
<div id="pager">
<span class="pt" style="left:376.5px">共 <span class="d2">8</span> 条</span>
<span class="pn" style="left:433.6px">上一页</span>
<span class="pn" style="left:513.2px">下一页</span>
<div class="psel"><span>10条/页</span><svg width="10" height="6" viewBox="0 0 10 6"><path d="M1.5 1 L5 4.6 L8.5 1" fill="none" stroke="#c0c4cc" stroke-width="1.1"/></svg></div>
<span class="pt" style="left:682.6px">前往</span>
<div class="pin">1</div>
<span class="pt" style="left:759.2px">页</span>
</div>
<div id="pact"><i class="f1"></i><i class="f2"></i><i class="bx"></i><b>1</b></div>
<div id="sub">论坛分类</div>
<svg id="cur" width="14" height="22" viewBox="0 0 14 22"><path d="M1 1 L1 17.2 L4.9 13.6 L7.6 20 L10.2 18.9 L7.5 12.7 L12.6 12.5 Z" fill="#fff" stroke="#10253f" stroke-width="1.3" stroke-linejoin="round"/></svg>
</body></html>
